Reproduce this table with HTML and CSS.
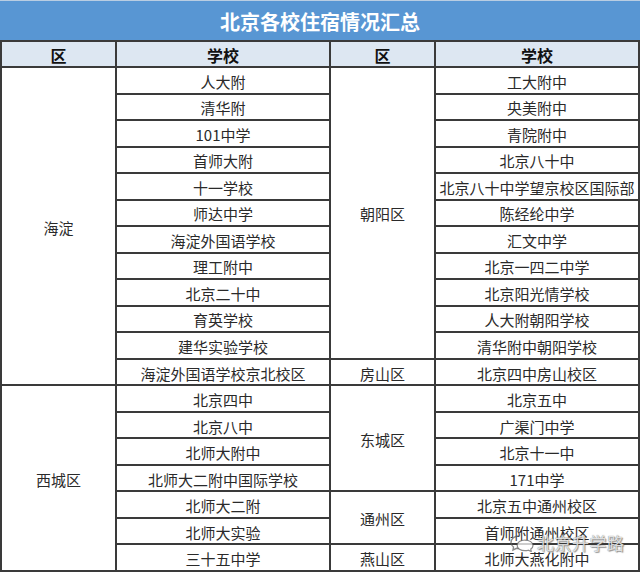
FILE: index.html
```html
<!DOCTYPE html>
<html lang="zh">
<head>
<meta charset="utf-8">
<title>北京各校住宿情况汇总</title>
<link rel="stylesheet" href="styles.css">
</head>
<body>
<div class="page">
  <div class="title">北京各校住宿情况汇总</div>
  <div class="grid">
    <div class="cell head">区</div>
    <div class="cell head">学校</div>
    <div class="cell head">区</div>
    <div class="cell head">学校</div>

    <div class="cell span12">海淀</div>
    <div class="cell">人大附</div>
    <div class="cell span11">朝阳区</div>
    <div class="cell">工大附中</div>

    <div class="cell">清华附</div>
    <div class="cell">央美附中</div>
    <div class="cell">101中学</div>
    <div class="cell">青院附中</div>
    <div class="cell">首师大附</div>
    <div class="cell">北京八十中</div>
    <div class="cell">十一学校</div>
    <div class="cell">北京八十中学望京校区国际部</div>
    <div class="cell">师达中学</div>
    <div class="cell">陈经纶中学</div>
    <div class="cell">海淀外国语学校</div>
    <div class="cell">汇文中学</div>
    <div class="cell">理工附中</div>
    <div class="cell">北京一四二中学</div>
    <div class="cell">北京二十中</div>
    <div class="cell">北京阳光情学校</div>
    <div class="cell">育英学校</div>
    <div class="cell">人大附朝阳学校</div>
    <div class="cell">建华实验学校</div>
    <div class="cell">清华附中朝阳学校</div>

    <div class="cell">海淀外国语学校京北校区</div>
    <div class="cell">房山区</div>
    <div class="cell">北京四中房山校区</div>

    <div class="cell span7">西城区</div>
    <div class="cell">北京四中</div>
    <div class="cell span4">东城区</div>
    <div class="cell">北京五中</div>

    <div class="cell">北京八中</div>
    <div class="cell">广渠门中学</div>
    <div class="cell">北师大附中</div>
    <div class="cell">北京十一中</div>
    <div class="cell">北师大二附中国际学校</div>
    <div class="cell">171中学</div>

    <div class="cell">北师大二附</div>
    <div class="cell span2">通州区</div>
    <div class="cell">北京五中通州校区</div>

    <div class="cell">北师大实验</div>
    <div class="cell">首师附通州校区</div>

    <div class="cell">三十五中学</div>
    <div class="cell">燕山区</div>
    <div class="cell">北师大燕化附中</div>
  </div>
  <div class="watermark">
    <svg class="wm-icon" width="24" height="18" viewBox="0 0 24 18">
      <path d="M9 2 C4 2 1 5 1 8.5 C1 10.5 2 12 3.5 13 L3 16 L6.5 14.3 C7.3 14.5 8.1 14.6 9 14.6" fill="none" stroke="rgba(90,90,90,0.7)" stroke-width="1.4"/>
      <path d="M15 6 C19.5 6 23 8.5 23 11.5 C23 13 22 14.3 20.8 15.1 L21.2 17.5 L18.3 16.2 C17.3 16.5 16.2 16.7 15 16.7 C10.5 16.7 7.2 14.3 7.2 11.4 C7.2 8.5 10.5 6 15 6 Z" fill="rgba(255,255,255,0.75)" stroke="rgba(90,90,90,0.7)" stroke-width="1.2"/>
    </svg>
    <span class="wm-text">北京升学路</span>
  </div>
</div>
</body>
</html>
```

FILE: styles.css
```css
html, body {
  margin: 0;
  padding: 0;
  background: #ffffff;
}

.page {
  position: relative;
  width: 640px;
  height: 572px;
  overflow: hidden;
  font-family: "Noto Sans CJK SC", "Liberation Sans", sans-serif;
}

.title {
  height: 40px;
  box-sizing: border-box;
  border-top: 1px solid #b9cde2;
  background: #5896d3;
  color: #ffffff;
  font-size: 20px;
  font-weight: 700;
  letter-spacing: 0;
  display: flex;
  align-items: center;
  justify-content: center;
  padding-top: 2px;
}

.grid {
  display: grid;
  box-sizing: border-box;
  height: 532px;
  padding: 2px;
  gap: 2px;
  background: #3a3a3a;
  grid-template-columns: 113px 212px 103px 1fr;
  grid-template-rows: 24px repeat(19, 1fr);
}

.cell {
  background: #ffffff;
  color: #2a2a2a;
  font-size: 15px;
  display: flex;
  align-items: center;
  justify-content: center;
  white-space: nowrap;
  padding-top: 2px;
  box-sizing: border-box;
}

.cell.head {
  background: #dde7f2;
  color: #111111;
  font-size: 16px;
  font-weight: 700;
}

.span12 { grid-row: span 12; }
.span11 { grid-row: span 11; }
.span7 { grid-row: span 7; }
.span4 { grid-row: span 4; }
.span2 { grid-row: span 2; }

.watermark {
  position: absolute;
  left: 510px;
  top: 530px;
  display: flex;
  align-items: center;
  gap: 3px;
}

.wm-text {
  font-size: 17px;
  color: rgba(255, 255, 255, 0.8);
  letter-spacing: 0.5px;
  text-shadow: 0 0 1px rgba(60, 60, 60, 0.8), 1px 1px 1px rgba(60, 60, 60, 0.5);
}
```
